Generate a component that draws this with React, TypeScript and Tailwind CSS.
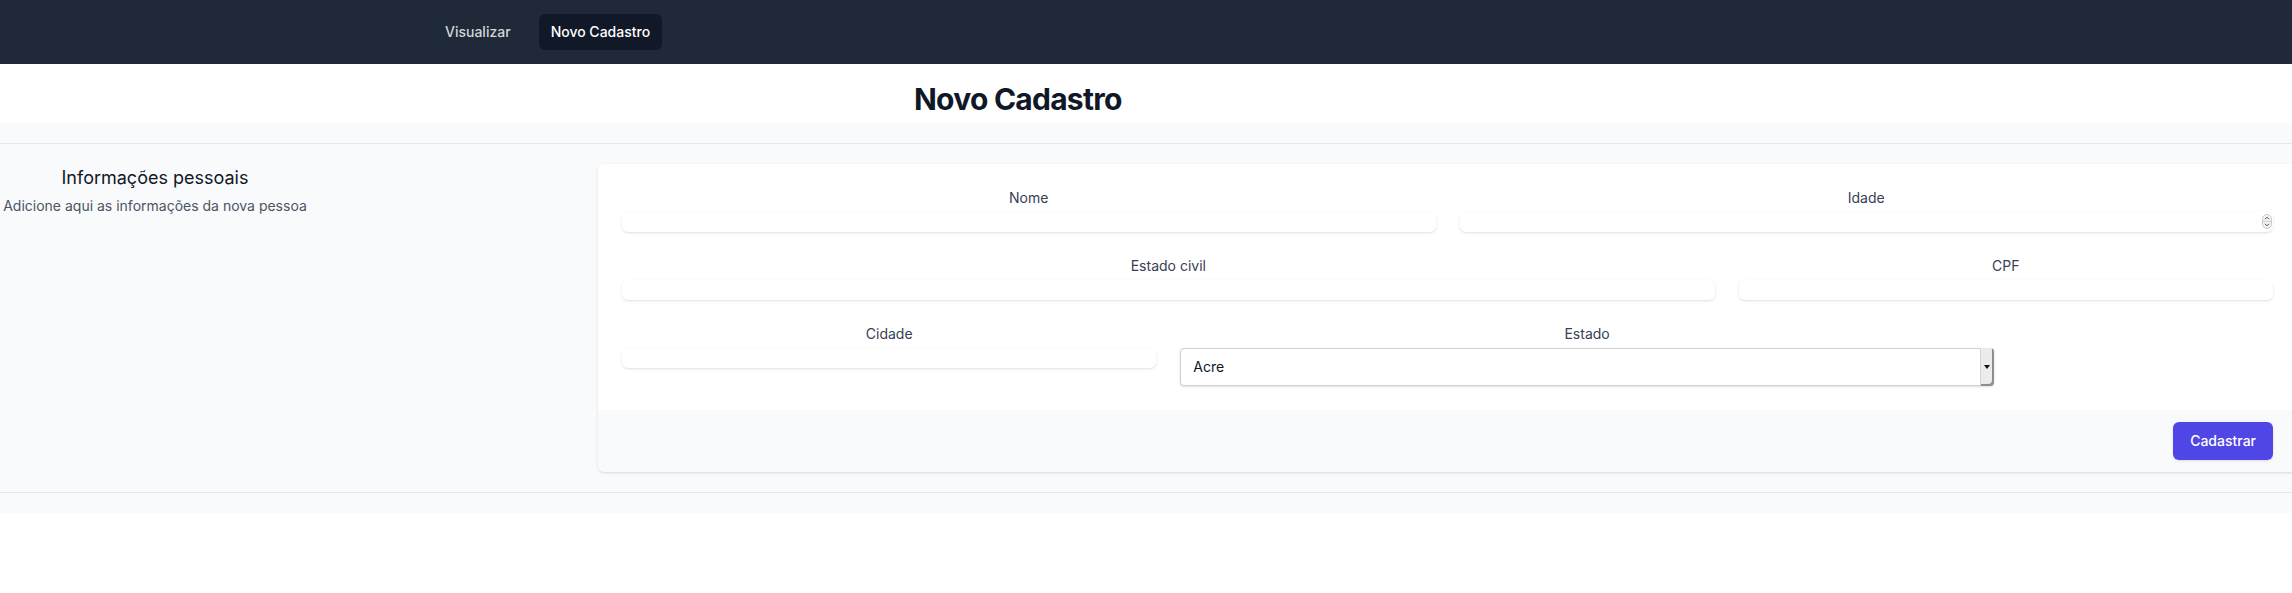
import React from "react";

function Field({ label, span, type = "text", spinner = false }: { label: string; span: string; type?: string; spinner?: boolean }) {
  return (
    <div className={span}>
      <label className="block text-sm font-normal text-gray-700 text-center">{label}</label>
      <div className="relative mt-1">
        <input
          type={type}
          className="block w-full h-5 text-sm shadow-sm rounded-md bg-white outline-none [appearance:textfield] [&::-webkit-inner-spin-button]:appearance-none"
        />
        {spinner && (
          <svg className="absolute right-[1px] top-[2px]" width="10" height="15" viewBox="0 0 10 15">
            <rect x="0.5" y="0.5" width="9" height="14" rx="4.5" fill="#f3f3f3" stroke="#c8c8c8" />
            <line x1="1" y1="7.5" x2="9" y2="7.5" stroke="#d0d0d0" />
            <path d="M3 5.2 L5 3.2 L7 5.2" fill="none" stroke="#444" strokeWidth="1" />
            <path d="M3 9.8 L5 11.8 L7 9.8" fill="none" stroke="#444" strokeWidth="1" />
          </svg>
        )}
      </div>
    </div>
  );
}

export default function App() {
  const font = { fontFamily: "Inter, 'Noto Sans', sans-serif" };
  return (
    <div className="min-h-[593px] w-full overflow-hidden bg-white" style={font}>
      <nav className="h-16 bg-[#1f2937] flex items-center pl-[433px] gap-4">
        <a className="px-3 py-2 rounded-md text-sm font-medium text-gray-300">Visualizar</a>
        <a className="px-3 py-2 rounded-md text-sm font-medium text-white bg-[#111827]">Novo Cadastro</a>
      </nav>
      <header className="bg-white pl-[914px] pt-[17px] pb-[6px]">
        <h1 className="text-3xl font-bold tracking-tight text-gray-900 leading-9">Novo Cadastro</h1>
      </header>
      <div className="bg-gray-50">
        <div className="py-5">
          <div className="border-t border-gray-200" />
        </div>
        <div className="flex">
          <div className="w-[598px] shrink-0">
            <div className="w-[310px] text-center">
              <h3 className="text-lg font-normal leading-7 text-gray-900">Informações pessoais</h3>
              <p className="mt-1 text-sm text-gray-600">Adicione aqui as informações da nova pessoa</p>
            </div>
          </div>
          <div className="w-[1699px] shrink-0 shadow rounded-md overflow-hidden">
            <div className="bg-white p-6">
              <div className="grid grid-cols-6 gap-6">
                <Field label="Nome" span="col-span-3" />
                <Field label="Idade" span="col-span-3" type="number" spinner />
                <Field label="Estado civil" span="col-span-4" />
                <Field label="CPF" span="col-span-2" />
                <Field label="Cidade" span="col-span-2" />
                <div className="col-span-3">
                  <label className="block text-sm font-normal text-gray-700 text-center">Estado</label>
                  <div className="relative mt-1">
                    <select className="block w-full appearance-none py-2 px-3 border border-[#cfcfcf] bg-white rounded-[4px] shadow-sm text-sm text-gray-900 outline-none">
                      <option>Acre</option>
                      <option>Alagoas</option>
                    </select>
                    <div className="absolute right-0 top-0 bottom-0 w-[14px] bg-[#ececec] border-l border-[#d4d4d4] shadow-[inset_-2px_-2px_0_#8e8e8e] rounded-r-[4px] flex items-center justify-center">
                      <svg width="6" height="4" viewBox="0 0 6 4" className="-ml-[1px]">
                        <path d="M0 0 H6 L3 4 Z" fill="#111" />
                      </svg>
                    </div>
                  </div>
                </div>
              </div>
            </div>
            <div className="bg-gray-50 px-6 py-3 text-right">
              <button className="inline-flex justify-center py-2 px-4 border border-transparent shadow-sm text-sm font-medium rounded-md text-white bg-[#4f46e5]">
                Cadastrar
              </button>
            </div>
          </div>
        </div>
        <div className="py-5">
          <div className="border-t border-gray-200" />
        </div>
      </div>
    </div>
  );
}
